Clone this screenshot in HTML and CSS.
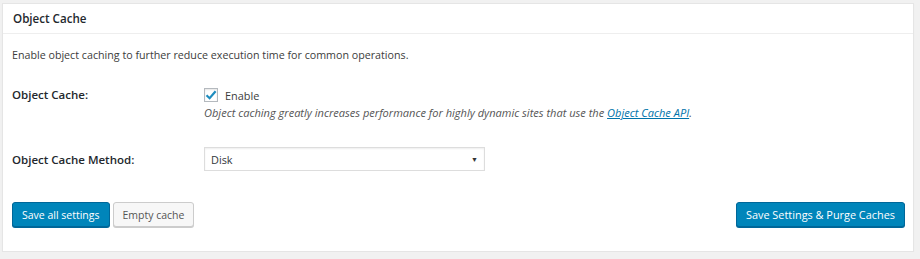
FILE: index.html
```html
<!DOCTYPE html>
<html lang="en">
<head>
    <meta charset="UTF-8">
    <title>Object Cache</title>
    <link rel="stylesheet" href="styles.css">
</head>
<body>
    <div class="postbox">
        <h3 class="hndle">Object Cache</h3>
        <div class="inside">
            <p class="intro">Enable object caching to further reduce execution time for common operations.</p>

            <div class="form-row row-enable">
                <div class="label">Object Cache:</div>
                <div class="field">
                    <label class="check">
                        <span class="box">
                            <svg width="12" height="12" viewBox="0 0 12 12"><path d="M1.5 6.2 L4.6 9.2 L10.6 2.2" fill="none" stroke="#1e8cbe" stroke-width="2.2"/></svg>
                        </span>
                        Enable
                    </label>
                    <p class="description">Object caching greatly increases performance for highly dynamic sites that use the <a href="#">Object Cache API</a>.</p>
                </div>
            </div>

            <div class="form-row row-method">
                <div class="label">Object Cache Method:</div>
                <div class="field">
                    <div class="select">
                        <span>Disk</span>
                        <span class="arrow">&#9660;</span>
                    </div>
                </div>
            </div>

            <div class="actions">
                <div class="left">
                    <button class="button primary">Save all settings</button>
                    <button class="button secondary">Empty cache</button>
                </div>
                <button class="button primary">Save Settings &amp; Purge Caches</button>
            </div>
        </div>
    </div>
</body>
</html>
```

FILE: styles.css
```css
body {
    margin: 0;
    padding: 3px 6px 0 2px;
    background-color: #f1f1f1;
    font-family: "Open Sans", "Noto Sans", sans-serif;
    font-size: 10.7px;
    color: #3c3c3c;
}

.postbox {
    background: #fff;
    border: 1px solid #e5e5e5;
    box-shadow: 0 1px 1px rgba(0, 0, 0, 0.04);
    height: 249px;
    box-sizing: border-box;
}

.hndle {
    margin: 0;
    padding: 0 10px;
    height: 29px;
    line-height: 29px;
    font-size: 11.6px;
    font-weight: 600;
    color: #23282d;
    border-bottom: 1px solid #eee;
}

.inside {
    padding: 0 8px 0 9px;
}

.intro {
    margin: 0;
    padding-top: 13px;
    line-height: 17px;
}

.form-row {
    display: flex;
}

.label {
    width: 192px;
    font-size: 11.5px;
    font-weight: 600;
    color: #23282d;
}

.row-enable {
    margin-top: 22px;
}

.row-enable .label {
    padding-top: 1px;
}

.check {
    display: flex;
    align-items: center;
    gap: 7px;
    height: 18px;
    font-size: 10.9px;
}

.box {
    width: 12px;
    height: 12px;
    border: 1px solid #b4b9be;
    box-shadow: inset 0 1px 2px rgba(0, 0, 0, 0.1);
    display: flex;
    align-items: center;
    justify-content: center;
}

.description {
    margin: 0;
    font-size: 11.05px;
    font-style: italic;
    color: #555;
    line-height: 17px;
}

.description a {
    color: #0073aa;
}

.row-method {
    margin-top: 26px;
    align-items: center;
}

.select {
    display: flex;
    align-items: center;
    justify-content: space-between;
    box-sizing: border-box;
    width: 281px;
    height: 24px;
    padding: 0 6px;
    border: 1px solid #ddd;
    box-shadow: inset 0 1px 2px rgba(0, 0, 0, 0.07);
    color: #32373c;
    font-size: 10.9px;
}

.arrow {
    font-size: 7px;
    color: #333;
}

.actions {
    margin-top: 31px;
    display: flex;
    justify-content: space-between;
}

.left {
    display: flex;
    gap: 3px;
}

.button {
    height: 25px;
    padding: 0 9px;
    border-radius: 3px;
    font-family: "Open Sans", "Noto Sans", sans-serif;
    font-size: 10.5px;
    cursor: pointer;
}

.actions > .primary {
    font-size: 10.9px;
}

.primary {
    background: #0085ba;
    border: 1px solid #006799;
    color: #fff;
    box-shadow: 0 1px 0 #006799;
}

.secondary {
    background: #f7f7f7;
    border: 1px solid #ccc;
    color: #555;
    box-shadow: 0 1px 0 #ccc;
}
```
